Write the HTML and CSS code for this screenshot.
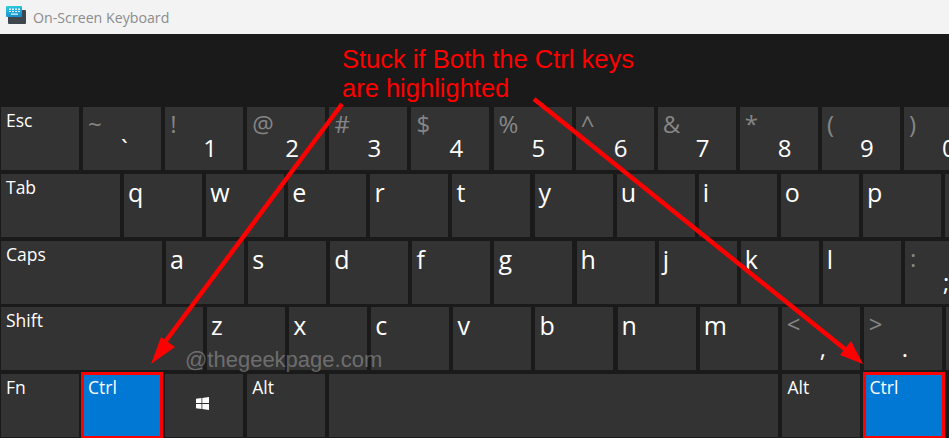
FILE: index.html
```html
<!DOCTYPE html>
<html lang="en">
<head>
    <meta charset="UTF-8">
    <title>On-Screen Keyboard</title>
    <link rel="stylesheet" href="styles.css">
</head>
<body>
    <div class="titlebar">
        <svg class="app-icon" width="20" height="18" viewBox="0 0 20 18">
            <defs>
                <linearGradient id="icon-top" x1="0" y1="0" x2="0.3" y2="1">
                    <stop offset="0" stop-color="#2fd0dc"/>
                    <stop offset="1" stop-color="#1a8fd0"/>
                </linearGradient>
            </defs>
            <rect x="2" y="4" width="18" height="14" rx="1" fill="#3f474e"/>
            <rect x="0" y="0" width="16" height="11" rx="1" fill="url(#icon-top)"/>
            <path d="M3 2.500h2v1.500H3zM6 2.500h2v1.500H6zM9 2.500h2v1.500H9zM12 2.500h2v1.500h-2zM3 5h2v1H3zM6 5h2v1H6zM9 5h2v1H9zM12 5h2v1h-2zM5 7.500h7v1.200H5z" fill="#e4f7fb"/>
        </svg>
        <span>On-Screen Keyboard</span>
    </div>

    <div class="banner">
        <p class="note">Stuck if Both the Ctrl keys<br>are highlighted</p>
    </div>

    <div class="keyboard">
        <div class="row">
            <div class="key name">Esc</div>
            <div class="key"><span class="up">~</span><span class="low">`</span></div>
            <div class="key"><span class="up">!</span><span class="low">1</span></div>
            <div class="key"><span class="up">@</span><span class="low">2</span></div>
            <div class="key"><span class="up">#</span><span class="low">3</span></div>
            <div class="key"><span class="up">$</span><span class="low">4</span></div>
            <div class="key"><span class="up">%</span><span class="low">5</span></div>
            <div class="key"><span class="up">^</span><span class="low">6</span></div>
            <div class="key"><span class="up">&amp;</span><span class="low">7</span></div>
            <div class="key"><span class="up">*</span><span class="low">8</span></div>
            <div class="key"><span class="up">(</span><span class="low">9</span></div>
            <div class="key"><span class="up">)</span><span class="low">0</span></div>
        </div>
        <div class="row">
            <div class="key name w-tab">Tab</div>
            <div class="key letter">q</div>
            <div class="key letter">w</div>
            <div class="key letter">e</div>
            <div class="key letter">r</div>
            <div class="key letter">t</div>
            <div class="key letter">y</div>
            <div class="key letter">u</div>
            <div class="key letter">i</div>
            <div class="key letter">o</div>
            <div class="key letter">p</div>
            <div class="key"></div>
        </div>
        <div class="row">
            <div class="key name w-caps">Caps</div>
            <div class="key letter">a</div>
            <div class="key letter">s</div>
            <div class="key letter">d</div>
            <div class="key letter">f</div>
            <div class="key letter">g</div>
            <div class="key letter">h</div>
            <div class="key letter">j</div>
            <div class="key letter">k</div>
            <div class="key letter">l</div>
            <div class="key"><span class="up">:</span><span class="low">;</span></div>
        </div>
        <div class="row">
            <div class="key name w-shift">Shift</div>
            <div class="key letter">z</div>
            <div class="key letter">x</div>
            <div class="key letter">c</div>
            <div class="key letter">v</div>
            <div class="key letter">b</div>
            <div class="key letter">n</div>
            <div class="key letter">m</div>
            <div class="key"><span class="up">&lt;</span><span class="low">,</span></div>
            <div class="key"><span class="up">&gt;</span><span class="low">.</span></div>
            <div class="key"></div>
        </div>
        <div class="row">
            <div class="key name">Fn</div>
            <div class="key name stuck">Ctrl</div>
            <div class="key win">
                <svg width="13" height="13" viewBox="0 0 13 13">
                    <path d="M0 1.800l5.500-.8v5H0zM6.300.9L13 0v6H6.300zM0 7h5.500v5L0 11.200zM6.300 7H13v6l-6.700-.9z" fill="#fff"/>
                </svg>
            </div>
            <div class="key name">Alt</div>
            <div class="key w-space"></div>
            <div class="key name">Alt</div>
            <div class="key name stuck">Ctrl</div>
        </div>
    </div>

    <div class="watermark">@thegeekpage.com</div>

    <svg class="arrows" width="949" height="438" viewBox="0 0 949 438">
        <path d="M342 104L162 346" stroke="#f00" stroke-width="4.500" fill="none"/>
        <path d="M151 364l10-27 14 10z" fill="#f00"/>
        <path d="M534 99L846 350" stroke="#f00" stroke-width="4.500" fill="none"/>
        <path d="M863 364l-23-9 11-14z" fill="#f00"/>
    </svg>
</body>
</html>
```

FILE: styles.css
```css
html, body {
    margin: 0;
    height: 100%;
    overflow: hidden;
}
body {
    position: relative;
    background-color: #1a1a1a;
    font-family: "Open Sans", "Noto Sans", sans-serif;
    color: #fff;
}
.titlebar {
    display: flex;
    align-items: center;
    gap: 7px;
    height: 34px;
    padding-left: 6px;
    background-color: #f3f3f3;
    color: #8c8c8c;
    font-size: 14.2px;
}
.app-icon {
    margin-bottom: 4px;
}
.banner {
    height: 73px;
    box-sizing: border-box;
    padding: 11px 0 0 342px;
}
.note {
    margin: 0;
    font-family: "Liberation Sans", Arial, sans-serif;
    font-size: 25.5px;
    line-height: 29px;
    color: #f00;
}
.keyboard {
    display: flex;
    flex-direction: column;
    gap: 3.75px;
    padding-left: 1px;
}
.row {
    display: flex;
    gap: 4.1px;
    width: 1100px;
}
.key {
    display: flex;
    flex-direction: column;
    flex: none;
    box-sizing: border-box;
    width: 78px;
    height: 63px;
    padding: 2px 5px;
    background-color: #333;
}
.name {
    font-size: 17.500px;
    line-height: 22px;
}
.letter {
    padding-left: 4px;
    font-size: 25px;
    line-height: 32px;
}
.up {
    margin-top: 1px;
    color: #868686;
    font-size: 24px;
    line-height: 28px;
}
.low {
    margin-top: -5px;
    margin-left: 33px;
    font-size: 24px;
    line-height: 30px;
}
.win {
    align-items: center;
    justify-content: center;
    padding: 0 3px 4px 0;
}
.w-tab {
    width: 119px;
}
.w-caps {
    width: 161px;
}
.w-shift {
    width: 202px;
}
.w-space {
    width: 449px;
}
.stuck {
    background-color: #0078d4;
    box-shadow: 0 0 0 2px #f00, inset 0 0 0 1px #f00;
}
.watermark {
    position: absolute;
    left: 185px;
    top: 347px;
    font-family: "Liberation Sans", Arial, sans-serif;
    font-size: 22px;
    color: rgba(255, 255, 255, 0.3);
}
.arrows {
    position: absolute;
    left: 0;
    top: 0;
}
```
